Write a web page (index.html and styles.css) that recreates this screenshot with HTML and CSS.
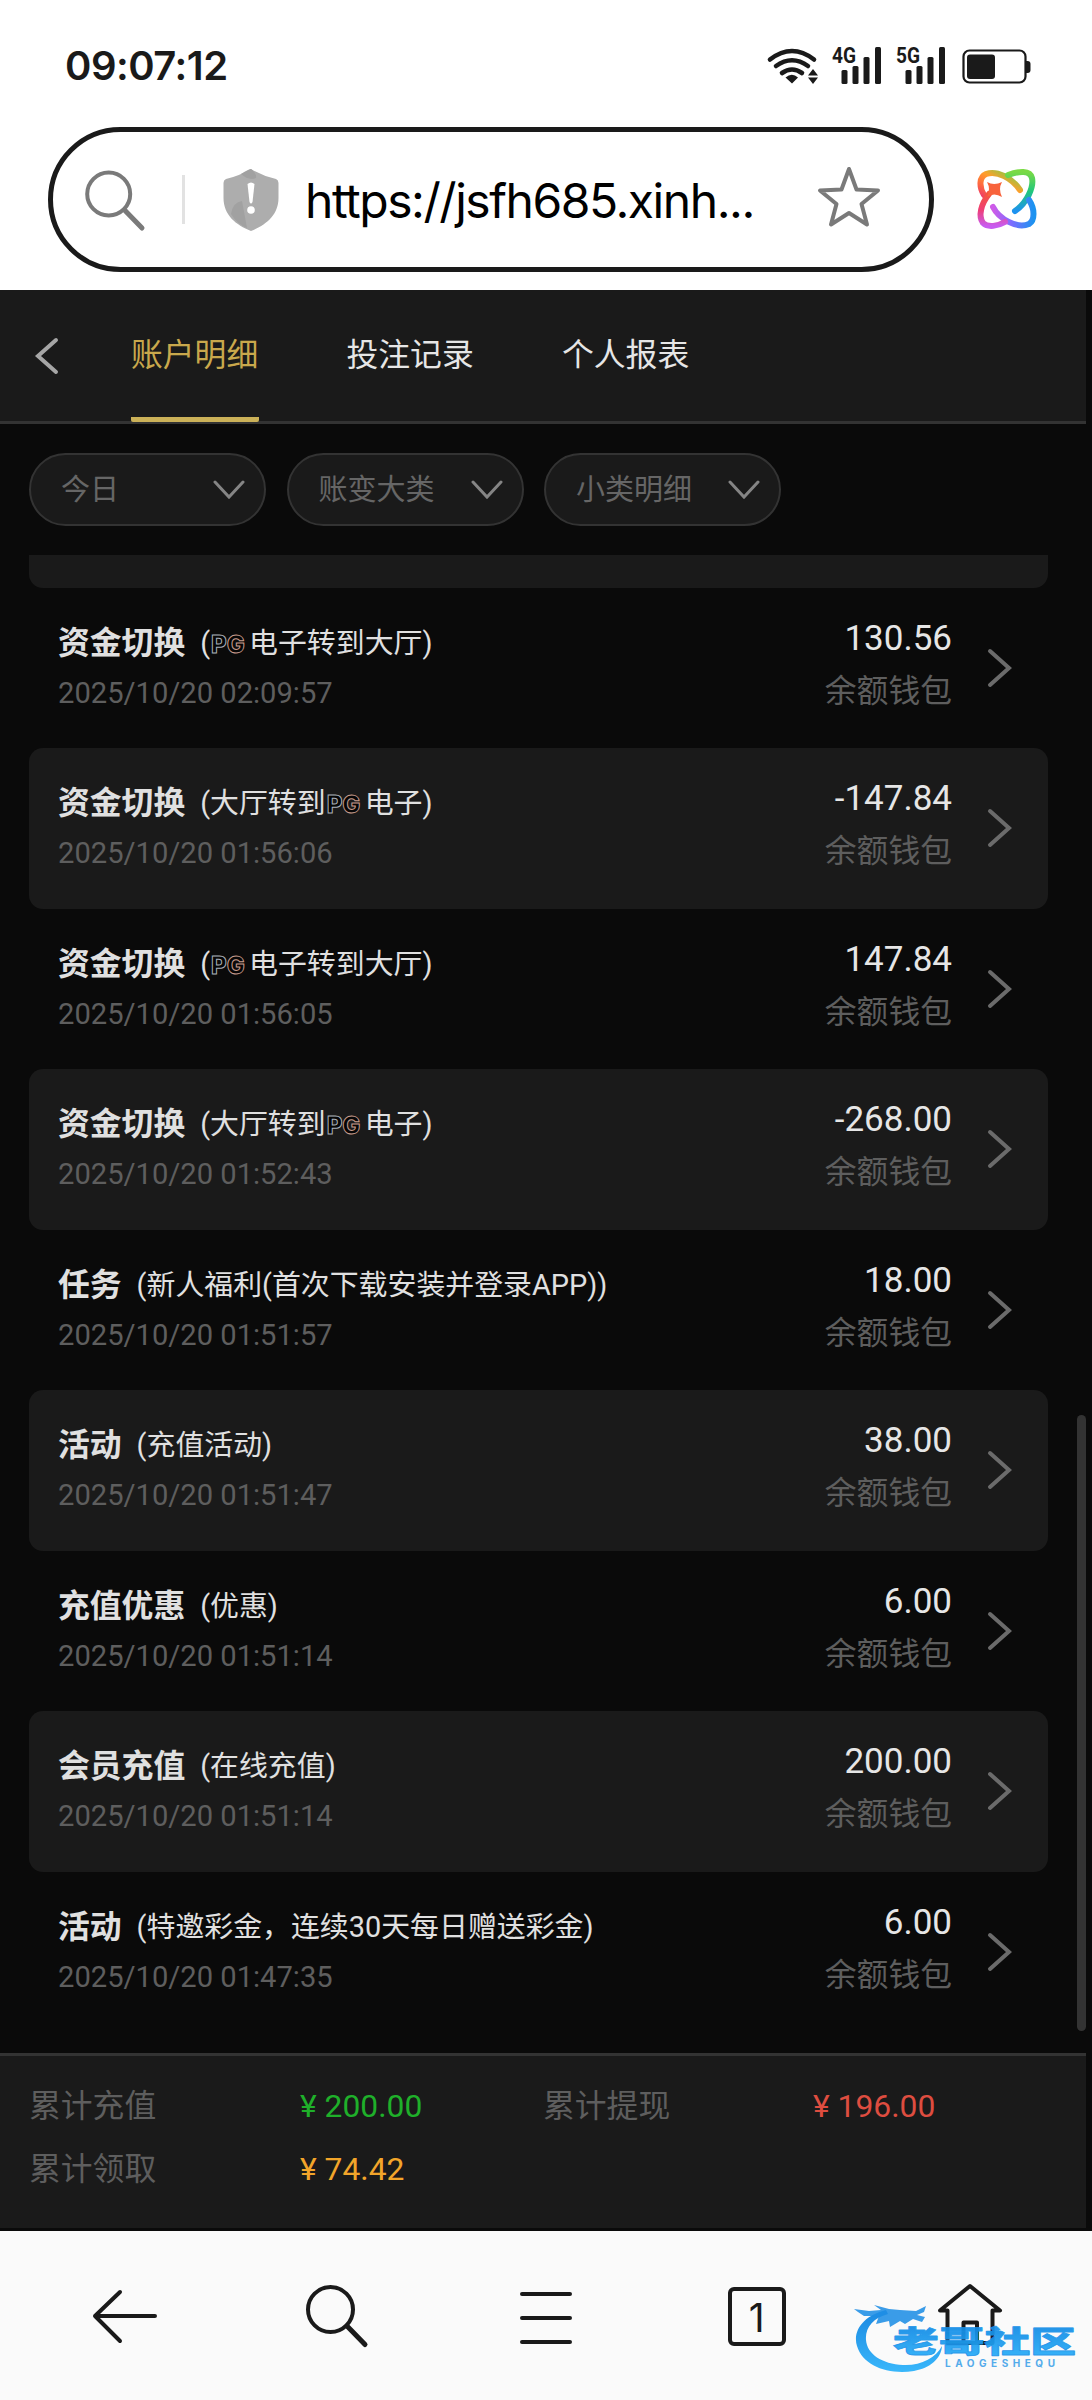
FILE: index.html
```html
<!DOCTYPE html>
<html lang="zh-CN">
<head>
<meta charset="utf-8">
<title>账户明细</title>
<link rel="stylesheet" href="styles.css">
</head>
<body>
<svg class="defs" width="0" height="0" aria-hidden="true">
  <symbol id="chev-down" viewBox="0 0 32 20"><path d="M2 2 L16 17 L30 2"/></symbol>
  <symbol id="chev-right" viewBox="0 0 26 40"><path d="M3 3 L22 20 L3 37"/></symbol>
</svg>

<header class="status">
  <time class="clock">09:07:12</time>
  <svg class="status-icons" width="266" height="40" viewBox="766 45 266 40">
    <g fill="none" stroke="#1a1a1a" stroke-width="4.6" stroke-linecap="round">
      <path d="M770 59.500 Q792 42.500 814 59.500"/>
      <path d="M776 66 Q792 54.500 808 66"/>
      <path d="M782 73 Q792 66 802 73"/>
    </g>
    <path d="M785.500 77.500 Q792 72 798 77.500 L792 83.500Z M808 75.500 L813 69 L818 75.500Z M808 77.500 H818 L813 84Z" fill="#1a1a1a"/>
    <g fill="#1a1a1a">
      <rect x="841.500" y="70" width="6" height="14" rx="1.500"/><rect x="852.500" y="66" width="6" height="18" rx="1.500"/><rect x="863.500" y="57" width="6" height="27" rx="1.500"/><rect x="875" y="47" width="6" height="37" rx="1.500"/>
      <rect x="905.500" y="70" width="6" height="14" rx="1.500"/><rect x="916.500" y="66" width="6" height="18" rx="1.500"/><rect x="927.500" y="57" width="6" height="27" rx="1.500"/><rect x="939" y="47" width="6" height="37" rx="1.500"/>
      <text class="net" x="832" y="62.500" textLength="24" lengthAdjust="spacingAndGlyphs">4G</text>
      <text class="net" x="896" y="62.500" textLength="24" lengthAdjust="spacingAndGlyphs">5G</text>
      <rect x="967" y="54.500" width="28" height="24.500" rx="3"/>
      <path d="M1026 61 h1.500 q3 0 3 3 v6 q0 3 -3 3 h-1.500z"/>
    </g>
    <rect x="963.500" y="50.500" width="62" height="32" rx="6" fill="none" stroke="#1a1a1a" stroke-width="2.200"/>
  </svg>
</header>

<div class="address">
  <div class="url-box">
    <svg class="url-search" width="62" height="64" viewBox="84 167 62 64" fill="none" stroke="#7a7a7a" stroke-linecap="round">
      <circle cx="108.700" cy="193" r="21.500" stroke-width="4"/><path d="M125 209.500 L142 227" stroke-width="5"/>
    </svg>
    <span class="url-divider"></span>
    <svg class="url-shield" width="56" height="64" viewBox="0 0 56 64">
      <path d="M28 1 Q40 8 53 11 Q55.500 12 55.500 15 V30 C55.500 47 43 57 28 63 C13 57 .5 47 .5 30 V15 Q.5 12 3 11 Q16 8 28 1Z" fill="#adadad"/>
      <path d="M8 46 Q10 34 19 33 L24 60 Q14 56 8 46Z M18 6 Q26 1 28 1 Q34 6 33 10Q26 13 18 6Z" fill="#a1a1a1"/>
      <path d="M24.500 16 Q28 13 31.500 16 L29.500 34 Q28 37 26.500 34Z" fill="#fff"/><circle cx="28" cy="42" r="3.800" fill="#fff"/>
    </svg>
    <span class="url-text">https://jsfh685.xinh...</span>
    <svg class="url-star" width="66" height="64" viewBox="816 164 66 64">
      <path d="M849 168 L856.500 188.500 L878 189.500 L861.500 203 L867 223.500 L849 212 L831 223.500 L836.500 203 L820 189.500 L841.500 188.500Z" fill="none" stroke="#7a7a7a" stroke-width="4" stroke-linejoin="round"/>
    </svg>
  </div>
  <svg class="assistant" width="60" height="60" viewBox="0 0 60 60">
    <defs>
      <linearGradient id="warm" x1="0" y1="1" x2="1" y2="0"><stop offset="0" stop-color="#ef3f63"/><stop offset=".25" stop-color="#ff6b3f"/><stop offset=".55" stop-color="#ff9f2b"/><stop offset="1" stop-color="#62d84e"/></linearGradient>
      <linearGradient id="green" x1="0" y1="0" x2="0" y2="1"><stop offset="0" stop-color="#7ada45"/><stop offset=".5" stop-color="#20c77c"/><stop offset="1" stop-color="#1e92f0"/></linearGradient>
      <linearGradient id="cool" x1="0" y1="0" x2="1" y2="0"><stop offset="0" stop-color="#cf5be8"/><stop offset=".45" stop-color="#7d6cff"/><stop offset="1" stop-color="#1c93f0"/></linearGradient>
      <linearGradient id="pink" x1="0" y1="0" x2="0" y2="1"><stop offset="0" stop-color="#f4533f"/><stop offset=".5" stop-color="#ef3f77"/><stop offset="1" stop-color="#c85cf0"/></linearGradient>
    </defs>
    <g fill="none" stroke-width="6" stroke-linecap="round">
      <path d="M43 21 C35 9 20 1 9 5 C2 8 2 18 7 26" stroke="url(#warm)"/>
      <path d="M31 6 C42 2 53 1 55 9 C57 18 50 34 38 42" stroke="url(#green)"/>
      <path d="M52 31 C58 40 58 51 52 55 C40 60 22 50 16 38" stroke="url(#cool)"/>
      <path d="M12 25 C4 35 1 47 6 54 C11 59 21 57 28 53" stroke="url(#pink)"/>
    </g>
    <path d="M10 13 Q17 17 25 13 Q21 20 25 28 Q17 23 10 28 Q14 20 10 13Z" fill="#f8633c"/>
  </svg>
</div>

<main class="page">
  <nav class="tabs">
    <svg class="back" width="26" height="38" viewBox="0 0 26 38" fill="none" stroke="#a6a6a6" stroke-width="4" stroke-linecap="round"><path d="M22 3 L4 19 L22 35"/></svg>
    <a class="tab active">账户明细</a>
    <a class="tab">投注记录</a>
    <a class="tab">个人报表</a>
  </nav>
  <div class="filters">
    <div class="filter">今日<svg class="down" width="32" height="20"><use href="#chev-down"/></svg></div>
    <div class="filter">账变大类<svg class="down" width="32" height="20"><use href="#chev-down"/></svg></div>
    <div class="filter">小类明细<svg class="down" width="32" height="20"><use href="#chev-down"/></svg></div>
  </div>
  <div class="scroll">
    <ul class="list">
      <li class="row partial"></li>
      <li class="row"><div class="info"><p class="title"><b>资金切换</b><span>(<i class="pg">P<em>G</em></i>电子转到大厅)</span></p><p class="date">2025/10/20 02:09:57</p></div><div class="sum"><p class="amount">130.56</p><p class="wallet">余额钱包</p></div><svg class="go" width="26" height="40"><use href="#chev-right"/></svg></li>
      <li class="row"><div class="info"><p class="title"><b>资金切换</b><span>(大厅转到<i class="pg">P<em>G</em></i>电子)</span></p><p class="date">2025/10/20 01:56:06</p></div><div class="sum"><p class="amount">-147.84</p><p class="wallet">余额钱包</p></div><svg class="go" width="26" height="40"><use href="#chev-right"/></svg></li>
      <li class="row"><div class="info"><p class="title"><b>资金切换</b><span>(<i class="pg">P<em>G</em></i>电子转到大厅)</span></p><p class="date">2025/10/20 01:56:05</p></div><div class="sum"><p class="amount">147.84</p><p class="wallet">余额钱包</p></div><svg class="go" width="26" height="40"><use href="#chev-right"/></svg></li>
      <li class="row"><div class="info"><p class="title"><b>资金切换</b><span>(大厅转到<i class="pg">P<em>G</em></i>电子)</span></p><p class="date">2025/10/20 01:52:43</p></div><div class="sum"><p class="amount">-268.00</p><p class="wallet">余额钱包</p></div><svg class="go" width="26" height="40"><use href="#chev-right"/></svg></li>
      <li class="row"><div class="info"><p class="title"><b>任务</b><span>(新人福利(首次下载安装并登录APP))</span></p><p class="date">2025/10/20 01:51:57</p></div><div class="sum"><p class="amount">18.00</p><p class="wallet">余额钱包</p></div><svg class="go" width="26" height="40"><use href="#chev-right"/></svg></li>
      <li class="row"><div class="info"><p class="title"><b>活动</b><span>(充值活动)</span></p><p class="date">2025/10/20 01:51:47</p></div><div class="sum"><p class="amount">38.00</p><p class="wallet">余额钱包</p></div><svg class="go" width="26" height="40"><use href="#chev-right"/></svg></li>
      <li class="row"><div class="info"><p class="title"><b>充值优惠</b><span>(优惠)</span></p><p class="date">2025/10/20 01:51:14</p></div><div class="sum"><p class="amount">6.00</p><p class="wallet">余额钱包</p></div><svg class="go" width="26" height="40"><use href="#chev-right"/></svg></li>
      <li class="row"><div class="info"><p class="title"><b>会员充值</b><span>(在线充值)</span></p><p class="date">2025/10/20 01:51:14</p></div><div class="sum"><p class="amount">200.00</p><p class="wallet">余额钱包</p></div><svg class="go" width="26" height="40"><use href="#chev-right"/></svg></li>
      <li class="row"><div class="info"><p class="title"><b>活动</b><span>(特邀彩金，连续30天每日赠送彩金)</span></p><p class="date">2025/10/20 01:47:35</p></div><div class="sum"><p class="amount">6.00</p><p class="wallet">余额钱包</p></div><svg class="go" width="26" height="40"><use href="#chev-right"/></svg></li>
    </ul>
    <div class="scrollbar"></div>
  </div>
  <footer class="totals">
    <span>累计充值</span><span class="in">¥ 200.00</span><span>累计提现</span><span class="out">¥ 196.00</span>
    <span>累计领取</span><span class="bonus">¥ 74.42</span>
  </footer>
</main>

<nav class="toolbar">
  <svg width="70" height="66" viewBox="90 2283 70 66"><path d="M155 2316 H95 M120 2292 L95 2316 L120 2341"/></svg>
  <svg width="70" height="66" viewBox="301 2283 70 66"><circle cx="330.500" cy="2309.500" r="22.500"/><path d="M347 2326 L365 2344.500" stroke-width="5"/></svg>
  <svg width="70" height="66" viewBox="513 2283 70 66"><path d="M522 2294 H570 M522 2318 H570 M522 2342 H570"/></svg>
  <span class="tab-count">1</span>
  <svg width="70" height="66" viewBox="935 2283 70 66"><path d="M947.500 2343 V2310.500 H940 L970 2286 L1000 2310.500 H992.500 V2343Z M963.500 2343 V2322.500 H977 V2343"/></svg>
  <svg class="watermark" width="226" height="80" viewBox="852 2298 226 80">
    <defs><linearGradient id="sea" x1="0" y1="0" x2="0" y2="1"><stop offset="0" stop-color="#0b80df"/><stop offset="1" stop-color="#2bb2fb"/></linearGradient></defs>
    <path d="M886 2310 C865 2315 852 2330 857 2346 C863 2366 888 2375 914 2371 C930 2368 941 2359 942 2346 C936 2358 920 2366 903 2365 C882 2364 867 2354 866 2340 C865 2328 873 2318 888 2314Z" fill="url(#sea)"/>
    <path d="M854 2309 L869 2311 L881 2310 L874 2305 L889 2309 L900 2310 L916 2311 L926 2306 L924 2312 L917 2315 L925 2317 L922 2322 L913 2319 L905 2324 L900 2321 L890 2327 L889 2321 L876 2324 L879 2316 L864 2316 L858 2312Z" fill="#0f86e4" opacity=".88"/>
    <text class="mark-name" x="893" y="2352" textLength="183" lengthAdjust="spacingAndGlyphs" fill="url(#sea)">老哥社区</text>
    <text class="mark-latin" x="945" y="2367" textLength="110">LAOGESHEQU</text>
  </svg>
</nav>
</body>
</html>
```
FILE: styles.css
```css
* { box-sizing: border-box; }
body {
  margin: 0;
  width: 1092px;
  height: 2400px;
  display: flex;
  flex-direction: column;
  overflow: hidden;
  background: #fff;
  font-family: Roboto, "Noto Sans CJK SC", sans-serif;
}
p, ul { margin: 0; padding: 0; }
svg { display: block; flex: none; overflow: visible; }
.defs { position: absolute; }

.status { height: 127px; display: flex; justify-content: space-between; padding: 45px 60px 0 65px; }
.clock { font: 600 40px/42px Inter, sans-serif; letter-spacing: -.5px; color: #1a1a1a; }
.net { font: 700 22px Roboto, sans-serif; }

.address { height: 163px; display: flex; align-items: flex-start; padding-left: 48px; }
.url-box {
  width: 886px; height: 145px; flex: none;
  display: flex; align-items: center;
  padding: 0 47px 0 31px;
  border: 5px solid #1a1a1a; border-radius: 73px;
}
.url-divider { width: 3px; height: 49px; margin-left: 36px; background: #e2e2e2; }
.url-shield { margin-left: 38px; }
.url-text { width: 500px; margin-left: 26px; font: 400 48px/60px Inter, sans-serif; letter-spacing: -1.450px; color: #000; white-space: nowrap; padding-top: 2px; }
.url-star { margin-left: auto; margin-top: -6px; }
.assistant { margin: 42px 0 0 43px; }

.page { height: 1941px; flex: none; background: #0a0a0a; border-bottom: 3px solid #0a0a0a; display: flex; flex-direction: column; }
.tabs {
  width: 1086px; height: 134px; flex: none;
  display: flex;
  padding-left: 34px;
  background: #1a1a1a; border-bottom: 3px solid #333;
}
.back { margin: 47px 71px 0 0; }
.tab { width: 128px; height: 132px; margin-right: 87.500px; padding-top: 41px; font-size: 31.800px; line-height: 48px; color: #e6e6e6; white-space: nowrap; }
.tab.active { color: #c9a84c; border-bottom: 5px solid #cbb158; border-radius: 2px; }

.filters { height: 131px; flex: none; display: flex; gap: 20.500px; padding: 29px 0 0 29px; }
.filter {
  width: 237px; height: 73px;
  display: flex; align-items: center; justify-content: space-between;
  padding: 0 19px 0 30px;
  font-size: 29px; line-height: 40px; color: #666;
  background: #1a1a1a; border: 2px solid #333; border-radius: 37px;
}
.down { fill: none; stroke: #858585; stroke-width: 3px; stroke-linecap: round; }

.scroll { flex: 1; display: flex; width: 1086px; padding-left: 29px; justify-content: space-between; }
.list { width: 1019px; list-style: none; }
.row { height: 160.500px; display: flex; border-radius: 14px; padding-left: 29px; }
.row:nth-child(odd) { background: #1a1a1a; }
.row.partial { height: 32.500px; border-radius: 0 0 14px 14px; }
.info { flex: 1; }
.title { display: flex; gap: 15px; height: 48px; margin-top: 31px; line-height: 48px; color: #e0e0e0; white-space: nowrap; }
.title b { font-size: 31.800px; }
.title span { font-size: 28.900px; }
.pg { display: inline-block; width: 39px; padding-left: 1px; font: 800 24px/24px Inter, sans-serif; color: #050505; -webkit-text-stroke: 1px #a9b0b8; }
.pg em { font-style: normal; -webkit-text-stroke-color: #c89d8e; }
.date { margin-top: 6px; font-size: 29.150px; line-height: 40px; color: #5e5e5e; }
.sum { text-align: right; }
.amount { margin-top: 30px; font-size: 35px; line-height: 42px; color: #e6e6e6; }
.wallet { margin-top: 9px; font-size: 31.800px; line-height: 44px; color: #5e5e5e; }
.go { margin: 60px 35px 0 35px; fill: none; stroke: #6b6b6b; stroke-width: 4px; stroke-linecap: round; }
.scrollbar { width: 9px; height: 616px; margin-top: 860px; border-radius: 5px; background: #333; }

.totals {
  width: 1086px; height: 175px; flex: none;
  display: grid; grid-template-columns: 271px 243px 270px auto; grid-auto-rows: 63px;
  align-content: start;
  padding: 19px 0 0 29px;
  font-size: 31.800px; line-height: 63px; color: #5e5e5e;
  background: #1a1a1a; border-top: 3px solid #333;
}
.in { color: #1fb02a; }
.out { color: #de4d40; }
.bonus { color: #f2a52a; }

.toolbar { flex: 1; position: relative; display: flex; align-items: flex-start; justify-content: space-between; padding: 52px 87px 0 90px; background: #fafafa; }
.toolbar > svg { fill: none; stroke: #1a1a1a; stroke-width: 4px; stroke-linecap: round; stroke-linejoin: round; }
.tab-count { width: 58px; height: 59px; margin: 4px 8px 0 4px; border: 4px solid #1a1a1a; border-radius: 6px; text-align: center; font: 400 39px/53px Inter, sans-serif; color: #1a1a1a; }
.toolbar > .watermark { position: absolute; left: 852px; top: 67px; stroke: none; opacity: .93; }
.mark-name { font: 900 30px "Noto Sans CJK SC", sans-serif; stroke: #1a93ea; stroke-width: .8px; }
.mark-latin { font: 700 10px Inter, sans-serif; fill: #48a6ea; }
```
